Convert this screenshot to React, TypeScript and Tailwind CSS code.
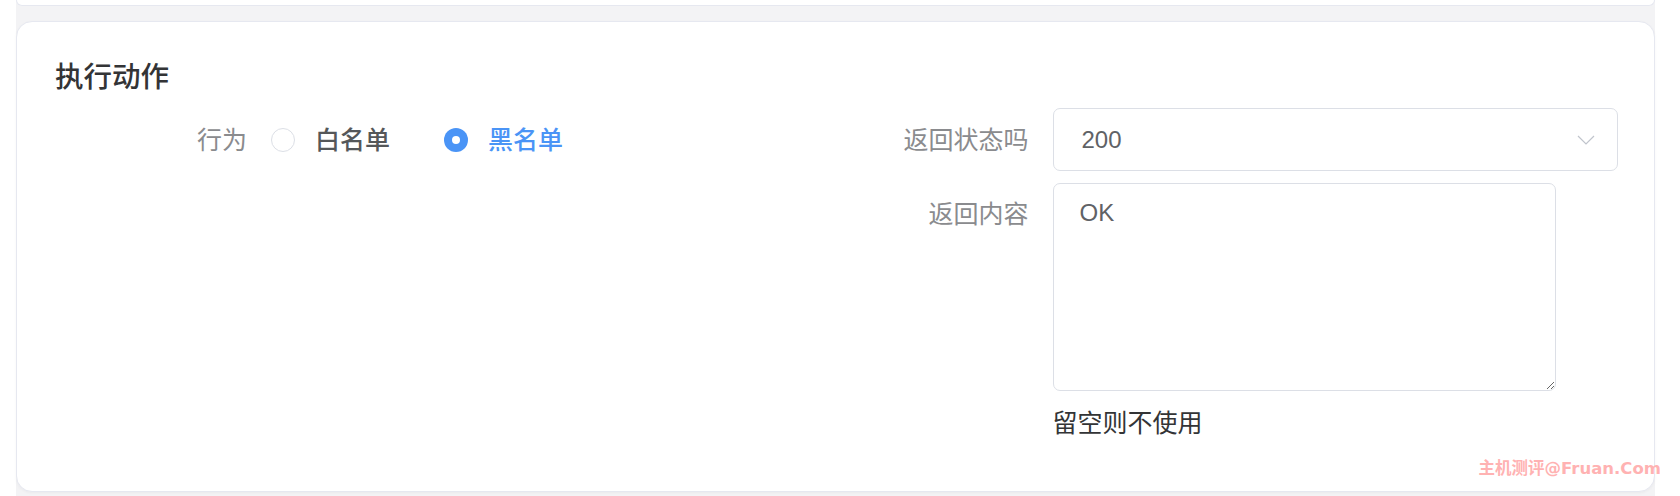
import React from 'react';

// Action settings card: allow/deny behaviour plus the response returned on a hit
const font = "font-['Liberation_Sans','Noto_Sans_CJK_SC',sans-serif]";

const Radio: React.FC<{ checked?: boolean; label: string }> = ({ checked, label }) => (
    <label className="flex items-center cursor-pointer">
        {checked ? (
            <span className="w-[24px] h-[24px] rounded-full bg-[#4a94f6] flex items-center justify-center">
                <span className="w-[8px] h-[8px] rounded-full bg-white" />
            </span>
        ) : (
            <span className="w-[24px] h-[24px] rounded-full border border-[#dcdfe6] bg-white" />
        )}
        <span className={`ml-[20px] text-[25px] leading-[36px] font-medium ${checked ? 'text-[#4a94f6]' : 'text-[#555759]'}`}>
            {label}
        </span>
    </label>
);

const App: React.FC = () => {
    return (
        <div className={`w-[1680px] h-[496px] bg-white overflow-hidden ${font}`}>
            <div className="relative ml-[16px] w-[1639px] h-[496px] bg-[#f3f3f5]">
                {/* tail of the card above */}
                <div className="h-[6px] bg-white border-x border-b border-[#e6e8f0] rounded-b-2xl" />

                {/* Main card */}
                <div className="mt-[15px] h-[471px] bg-white border border-[#e6e8f0] rounded-2xl shadow-[0_1px_3px_rgba(0,0,0,0.04)] pt-[41px] pl-[38px] pr-[36px]">
                    <h2 className="text-[28.5px] leading-[28px] font-medium text-[#333436]">执行动作</h2>

                    <div className="mt-[17px] grid grid-cols-2">
                        {/* Left column: behaviour */}
                        <div className="flex items-center h-[63px]">
                            <div className="w-[216px] pr-[24px] text-right text-[25px] leading-[36px] text-[#8a8b8e]">行为</div>
                            <div className="flex items-center gap-[54px]">
                                <Radio label="白名单" />
                                <Radio label="黑名单" checked />
                            </div>
                        </div>

                        {/* Right column: status code + body */}
                        <div className="flex flex-col">
                            <div className="flex items-center h-[63px]">
                                <div className="w-[216px] pr-[24px] text-right text-[25px] leading-[36px] text-[#8a8b8e]">返回状态吗</div>
                                <div className="flex-1 h-[63px] border border-[#dcdfe6] rounded-[7px] flex items-center justify-between pl-[28px] pr-[22px]">
                                    <span className="text-[24px] text-[#606266]">200</span>
                                    <svg width="18" height="10" viewBox="0 0 18 10" fill="none">
                                        <polyline points="1,1 9,9 17,1" stroke="#c0c4cc" strokeWidth="1.2" />
                                    </svg>
                                </div>
                            </div>

                            <div className="flex mt-[12px]">
                                <div className="w-[216px] pr-[24px] text-right text-[25px] leading-[63px] text-[#8a8b8e]">返回内容</div>
                                <div>
                                    <textarea
                                        defaultValue="OK"
                                        className="block w-[503px] h-[208px] border border-[#dcdfe6] rounded-[7px] pt-[11px] px-[26px] text-[24px] leading-[36px] text-[#606266] outline-none"
                                    />
                                    <div className="mt-[14px] text-[25px] leading-[36px] text-[#333436]">留空则不使用</div>
                                </div>
                            </div>
                        </div>
                    </div>
                </div>

                {/* watermark */}
                <div className="absolute right-[-6px] bottom-[17px] text-[16.5px] leading-[20px] font-bold text-[#ffb2b2] font-['DejaVu_Sans','Noto_Sans_CJK_SC',sans-serif]">
                    主机测评@Fruan.Com
                </div>
            </div>
        </div>
    );
};

export default App;
